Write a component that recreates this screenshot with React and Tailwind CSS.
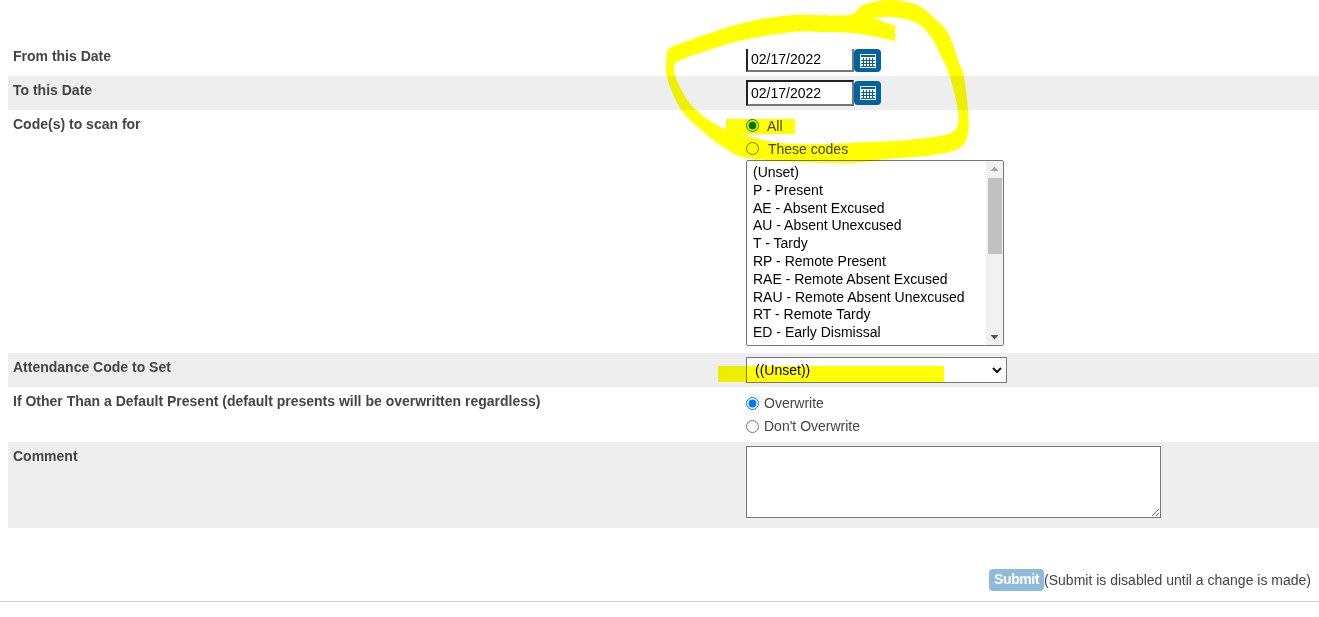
import React from "react";

const codes = [
  "(Unset)",
  "P - Present",
  "AE - Absent Excused",
  "AU - Absent Unexcused",
  "T - Tardy",
  "RP - Remote Present",
  "RAE - Remote Absent Excused",
  "RAU - Remote Absent Unexcused",
  "RT - Remote Tardy",
  "ED - Early Dismissal",
];

const outer = [
  [848, 15], [863, 5], [890, 0], [917, 5], [933, 17], [948, 33], [958, 60], [964, 77], [968, 110], [968, 133], [960, 148],
  [933, 155], [887, 159], [853, 163], [800, 162], [747, 158], [725, 148], [700, 129], [680, 108], [667, 77],
  [667, 55], [670, 48], [693, 39], [743, 23], [793, 15],
];
const inner = [
  [895, 41], [895, 41], [877, 37], [853, 33], [820, 32], [793, 32], [743, 40], [703, 52], [681, 60], [674, 67],
  [678, 83], [692, 106], [715, 124], [737, 133], [780, 143], [820, 144], [870, 142], [907, 140], [945, 135],
  [957, 127], [958, 110], [950, 77], [943, 60], [931, 37], [917, 23], [893, 17], [873, 18], [873, 18], [895, 26], [895, 26],
];

function smooth(points) {
  const n = points.length;
  const at = (i) => points[(i + n) % n];
  let d = `M${points[0][0]} ${points[0][1]}`;
  for (let i = 0; i < n; i++) {
    const [p0, p1, p2, p3] = [at(i - 1), at(i), at(i + 1), at(i + 2)];
    const c1x = p1[0] + (p2[0] - p0[0]) / 6;
    const c1y = p1[1] + (p2[1] - p0[1]) / 6;
    const c2x = p2[0] - (p3[0] - p1[0]) / 6;
    const c2y = p2[1] - (p3[1] - p1[1]) / 6;
    d += ` C${c1x} ${c1y} ${c2x} ${c2y} ${p2[0]} ${p2[1]}`;
  }
  return d + " Z";
}

function CalendarButton({ className }) {
  return (
    <button type="button" className={`flex w-[27px] items-center justify-center rounded-[4px] bg-[#00629f] ${className}`}>
      <svg width="16" height="14" viewBox="0 0 16 14" shapeRendering="crispEdges">
        <rect x="0" y="0" width="16" height="14" fill="#fff" />
        <g fill="#00629f">
          <rect x="1" y="1" width="14" height="2" />
          {[6, 9, 12].map((y) => (
            <rect key={y} x="1" y={y} width="14" height="1" />
          ))}
          {[3, 6, 9, 12].map((x) => (
            <rect key={x} x={x} y="4" width="1" height="9" />
          ))}
        </g>
      </svg>
    </button>
  );
}

function Row({ label, gray, className, valueClass, children }) {
  return (
    <div className={`flex ${gray ? "bg-[#eeeeee]" : ""} ${className}`}>
      <div className="w-[738px] shrink-0 pl-[5px] pt-[6px] text-[14px] font-bold leading-[16px] text-[#444444]">{label}</div>
      <div className={`flex-1 ${valueClass || ""}`}>{children}</div>
    </div>
  );
}

export default function App() {
  return (
    <div className="relative h-[617px] w-[1319px] overflow-hidden bg-white font-['Liberation_Sans',Arial,sans-serif] text-[14px] text-[#444444]">
      <div className="pl-2 pt-[42px]">
        <Row label="From this Date" className="h-[34px]" valueClass="pt-[7px]">
          <div className="flex h-[23px]">
            <input
              readOnly
              value="02/17/2022"
              className="h-[23px] w-[108px] border-b-2 border-l-2 border-r-2 border-b-[#767676] border-l-[#222] border-r-[#767676] bg-white pb-[2px] pl-[3px] font-['Liberation_Sans',Arial,sans-serif] text-[14px] text-black outline-none"
            />
            <CalendarButton className="h-[23px]" />
          </div>
        </Row>
        <Row label="To this Date" gray className="h-[34px]" valueClass="pt-[4px]">
          <div className="flex h-[26px]">
            <input
              readOnly
              value="02/17/2022"
              className="h-[26px] w-[108px] border-2 border-t-[#222] border-r-[#767676] border-b-[#767676] border-l-[#222] bg-white pl-[3px] font-['Liberation_Sans',Arial,sans-serif] text-[14px] text-black outline-none"
            />
            <CalendarButton className="mt-px h-[24px]" />
          </div>
        </Row>
        <Row label="Code(s) to scan for" className="h-[243px]" valueClass="pt-[8px]">
          <label className="flex h-[14px] items-center">
            <input type="radio" name="scan" defaultChecked className="m-0 size-[13px] accent-[#0075ff]" />
            <span className="ml-2 pt-px leading-[16px]">All</span>
          </label>
          <label className="mt-[9px] flex h-[14px] items-center">
            <input type="radio" name="scan" className="m-0 size-[13px]" />
            <span className="ml-[9px] pt-[2px] leading-[16px]">These codes</span>
          </label>
          <div className="mt-[5px] flex h-[186px] w-[258px] rounded-[2px] border border-[#767676] bg-white">
            <ul className="flex-1 pl-[6px] pt-[3px] text-[14px] leading-[17.8px] text-black">
              {codes.map((c) => (
                <li key={c} className="whitespace-nowrap">{c}</li>
              ))}
            </ul>
            <div className="flex w-[17px] flex-col items-center bg-[#f1f1f1]">
              <svg width="17" height="17" viewBox="0 0 17 17" className="shrink-0">
                <path d="M8.5 5.5 L12.5 10 H4.5 Z" fill="#a3a3a3" />
              </svg>
              <div className="h-[76px] w-[14px] bg-[#c1c1c1]" />
              <div className="flex-1" />
              <svg width="17" height="17" viewBox="0 0 17 17" className="shrink-0">
                <path d="M8.5 11.5 L12.5 7 H4.5 Z" fill="#505050" />
              </svg>
            </div>
          </div>
        </Row>
        <Row label="Attendance Code to Set" gray className="h-[34px]" valueClass="pt-[4px]">
          <div className="flex h-[26px] w-[261px] items-center justify-between border border-[#767676] bg-white pl-[8px] pr-[4px] text-black">
            <span>((Unset))</span>
            <svg width="10" height="7" viewBox="0 0 10 7" fill="none" stroke="#111" strokeWidth="2">
              <path d="M1 1 L5 5 L9 1" />
            </svg>
          </div>
        </Row>
        <Row label="If Other Than a Default Present (default presents will be overwritten regardless)" className="h-[55px]" valueClass="pt-[9px]">
          <label className="flex h-[14px] items-center">
            <input type="radio" name="ow" defaultChecked className="m-0 size-[13px] accent-[#0075ff]" />
            <span className="ml-[5px] leading-[16px]">Overwrite</span>
          </label>
          <label className="mt-[9px] flex h-[14px] items-center">
            <input type="radio" name="ow" className="m-0 size-[13px]" />
            <span className="ml-[5px] leading-[16px]">Don't Overwrite</span>
          </label>
        </Row>
        <Row label="Comment" gray className="h-[86px]" valueClass="pt-[4px]">
          <textarea readOnly className="block h-[72px] w-[415px] border border-[#767676] bg-white outline-none" />
        </Row>
      </div>
      <div className="mt-[41px] flex h-[22px] items-center justify-end pr-[8px]">
        <button type="button" className="h-[22px] w-[55px] rounded-[4px] bg-[#8fbbda] pb-[2px] text-center text-[14px] font-bold leading-[18px] tracking-[-0.4px] text-white">Submit</button>
        <span>(Submit is disabled until a change is made)</span>
      </div>
      <div className="mt-[10px] h-px bg-[#cccccc]" />

      <svg className="pointer-events-none absolute left-0 top-0 mix-blend-multiply" width="1319" height="617" viewBox="0 0 1319 617">
        <path d={`${smooth(outer)} ${smooth(inner)}`} fill="#ffff00" fillRule="evenodd" />
        <rect x="726" y="119" width="69" height="15" fill="#ffff00" />
        <rect x="718" y="366" width="226" height="16" fill="#ffff00" />
      </svg>
    </div>
  );
}
